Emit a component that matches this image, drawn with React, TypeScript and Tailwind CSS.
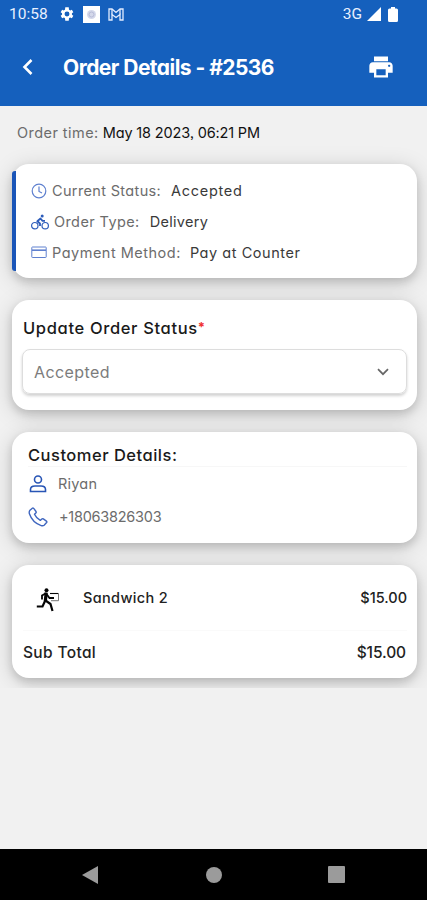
import React from 'react';

interface StatusRowProps {
  icon: React.ReactNode;
  label: string;
  value: string;
  labelClass: string;
  valueClass: string;
}

const StatusRow: React.FC<StatusRowProps> = ({ icon, label, value, labelClass, valueClass }) => (
  <div className="flex h-[31px] items-center whitespace-nowrap text-[14.5px]">
    {icon}
    <span className={`text-[#6c6c6c] ${labelClass}`}>{label}</span>
    <span className={`text-[#3a3a3a] ${valueClass}`}>{value}</span>
  </div>
);

const Card: React.FC<{ className: string; children: React.ReactNode }> = ({ className, children }) => (
  <section
    className={`w-[405px] shrink-0 rounded-[17px] bg-white shadow-[0_4px_9px_rgba(0,0,0,0.14),0_4px_22px_rgba(0,0,0,0.17)] ${className}`}
  >
    {children}
  </section>
);

const StatusBar = () => (
  <div className="flex h-7 items-center pl-[9px] pr-[29px] font-[Roboto] text-[15.5px] text-[#e8f0ff]">
    <span className="w-[50px] pt-px">10:58</span>
    <svg className="h-[16px] w-[16px]" viewBox="0 0 24 24" fill="white">
      <path
        fillRule="evenodd"
        d="M19.4 13a7.500 7.500 0 0 0 0-2l2.100-1.700-2.200-3.700-2.600 1a7.500 7.500 0 0 0-1.700-1L14.600 2H9.400L9 5.600a7.500 7.500 0 0 0-1.700 1l-2.600-1-2.200 3.700L4.600 11a7.500 7.500 0 0 0 0 2l-2.100 1.700 2.200 3.700 2.600-1a7.500 7.500 0 0 0 1.700 1l.4 3.600h5.200l.4-3.600a7.500 7.500 0 0 0 1.700-1l2.600 1 2.200-3.700zM12 15.700a3.700 3.700 0 1 1 0-7.400 3.700 3.700 0 0 1 0 7.400z"
      />
    </svg>
    <svg className="ml-[8px] h-[17px] w-[17px]" viewBox="0 0 17 17">
      <path fill="#fff" d="M0 0h17v17H0z" />
      <circle cx="8.500" cy="8.500" r="4.500" fill="#d4d8ea" />
      <circle cx="8.500" cy="8.500" r="2.500" fill="none" stroke="#b8bcd8" />
    </svg>
    <svg className="ml-[8px] h-[13px] w-[16px]" viewBox="0 0 16 13" fill="none" stroke="#e2ecff" strokeWidth="1.300">
      <path d="M1 12V1h3l4 3.500L12 1h3v11h-3V6.500L8 9.500l-4-3V12z" />
      <path d="M4 1v5.500M12 1v5.500" />
    </svg>
    <span className="ml-auto pt-px text-[15.5px]">3G</span>
    <svg className="ml-[5px] h-[14px] w-[14px]" viewBox="0 0 14 14" fill="white">
      <path d="M14 0v14H0z" />
    </svg>
    <svg className="ml-[7px] h-[15px] w-[10px]" viewBox="0 0 10 15" fill="white">
      <path d="M3 0h4v1.500h1.500Q10 1.500 10 3v10.500Q10 15 8.500 15h-7Q0 15 0 13.500V3Q0 1.500 1.500 1.500H3z" />
    </svg>
  </div>
);

const Header = () => (
  <header className="h-[106px] shrink-0 bg-[#1560bd]">
    <StatusBar />
    <div className="flex h-[78px] items-center pl-[22px] pr-[32px]">
      <svg className="h-[16px] w-[11px]" viewBox="0 0 11 16" fill="none" stroke="white" strokeWidth="2.600">
        <path d="M9.500 1 2.500 8l7 7" />
      </svg>
      <h1 className="ml-[30px] mt-px whitespace-nowrap text-[21px] font-bold tracking-[-0.54px] text-white">
        Order Details - #2536
      </h1>
      <svg className="ml-auto h-[28px] w-[28px] shrink-0" viewBox="0 0 24 24" fill="white">
        <path d="M19 8H5c-1.660 0-3 1.340-3 3v6h4v4h12v-4h4v-6c0-1.660-1.340-3-3-3zm-3 11H8v-5h8v5zm3-7c-.55 0-1-.45-1-1s.45-1 1-1 1 .45 1 1-.45 1-1 1zm-1-9H6v4h12V3z" />
      </svg>
    </div>
  </header>
);

const ClockIcon = () => (
  <svg className="h-[16px] w-[16px]" viewBox="0 0 16 16" fill="none" stroke="#5f80cf" strokeWidth="1.200">
    <circle cx="8" cy="8" r="6.800" />
    <path d="M8 3.500V8.500l3 1.500" />
  </svg>
);

const BikeIcon = () => (
  <svg className="h-[16px] w-[18px]" viewBox="0 0 18 16" fill="none" stroke="#2d5cba" strokeWidth="1.200">
    <circle cx="3.800" cy="11.700" r="3.200" />
    <circle cx="14.200" cy="11.700" r="3.200" />
    <circle cx="11.200" cy="1.900" r="1.500" fill="#2d5cba" stroke="none" />
    <path strokeWidth="1.800" strokeLinejoin="round" d="M9 12V9.500L6.300 7.300 9.500 4.500l2 2.300H14" />
  </svg>
);

const CardIcon = () => (
  <svg className="h-[13px] w-[16px]" viewBox="0 0 16 13" fill="none" stroke="#5f80cf" strokeWidth="1">
    <rect x="0.800" y="1" width="14.400" height="10.500" rx="0.600" />
    <path strokeWidth="1.600" d="M1 4.200h14" />
  </svg>
);

const UserIcon = () => (
  <svg className="h-[18px] w-[18px]" viewBox="0 0 18 18" fill="none" stroke="#2855b5" strokeWidth="1.600">
    <circle cx="9" cy="4.500" r="3.500" />
    <path d="M1.500 16.500v-2Q1.500 11 6 11h6q4.500 0 4.500 3.500v2z" />
  </svg>
);

const PhoneIcon = () => (
  <svg className="h-[20px] w-[20px]" viewBox="0 0 20 20" fill="none" stroke="#3f66bf" strokeWidth="1.400" strokeLinejoin="round">
    <path d="M1.700 3.600 4.300 1.200Q5 .7 5.700 1.400L8 4.500q.5.800-.2 1.500L6.500 7.300q1.700 3.900 5.800 6.100l1.500-1.400q.7-.6 1.500-.1l3.100 2.200q.8.700.2 1.400l-2.500 2.700q-1.100 1-2.900.4Q4.300 15.500 1.300 6.500 1 4.700 1.700 3.600z" />
  </svg>
);

const CourierIcon = () => (
  <svg className="mt-[5px] h-[24px] w-[24px]" viewBox="0 0 24 24" fill="none" stroke="#050505">
    <circle cx="10.500" cy="2.200" r="2" fill="#050505" stroke="none" />
    <path strokeWidth="3.200" d="M10.200 4.500 9.300 13.500" />
    <path strokeWidth="1.800" d="M9.500 5.500 6 7.500v4M10.500 6l3 4h4.500" />
    <path strokeWidth="2.200" d="M9.500 12 6.500 18.500H.8M9.500 12.500l5 3.500 2 7" />
    <path strokeWidth="1.100" d="M14 5.500h8.500" />
    <path strokeWidth="1" stroke="#777" d="M22.500 6v6.700H15" />
  </svg>
);

const NavBar = () => (
  <nav className="flex h-[51px] shrink-0 items-center bg-black pl-[82px]">
    <svg className="h-[18px] w-[16px]" viewBox="0 0 16 18" fill="#9b9b9b">
      <path d="M16 0v18L0 9z" />
    </svg>
    <div className="ml-[108px] h-[16px] w-[16px] rounded-full bg-[#9b9b9b]" />
    <div className="ml-[106px] h-[17px] w-[17px] rounded-[1px] bg-[#9b9b9b]" />
  </nav>
);

export default function App() {
  return (
    <div className="flex h-[900px] w-[427px] flex-col overflow-hidden bg-[#f1f1f1] font-[Inter,sans-serif] [font-feature-settings:'cv11','ss03']">
      <Header />
      <main className="flex h-[582px] shrink-0 flex-col overflow-hidden pl-[12px]">
        <p className="ml-[5px] mt-[16px] h-[22px] whitespace-nowrap text-[14.5px] leading-[22px] text-[#111]">
          <span className="tracking-[0.45px] text-[#6c6c6c]">Order time:</span>
          <span className="ml-[4px] tracking-[-0.15px]">May 18 2023, 06:21 PM</span>
        </p>

        <Card className="mt-[20px] flex h-[114px] items-center">
          <div className="h-[100px] w-[4px] rounded-l-[3px] bg-[#1a55b8]" />
          <div className="ml-[15px] pt-px">
            <StatusRow
              icon={<ClockIcon />}
              label="Current Status:"
              value="Accepted"
              labelClass="ml-[5px] tracking-[0.35px]"
              valueClass="ml-[10px] tracking-[0.7px]"
            />
            <StatusRow
              icon={<BikeIcon />}
              label="Order Type:"
              value="Delivery"
              labelClass="ml-[5px] tracking-[0.4px]"
              valueClass="ml-[10px] tracking-[0.3px]"
            />
            <StatusRow
              icon={<CardIcon />}
              label="Payment Method:"
              value="Pay at Counter"
              labelClass="ml-[5px] tracking-[0.5px]"
              valueClass="ml-[9px] tracking-[0.55px]"
            />
          </div>
        </Card>

        <Card className="mt-[22px] h-[110px] px-[10px] pt-[17px]">
          <div className="flex h-[22px] items-center whitespace-nowrap pl-px text-[16.5px] font-medium tracking-[0.65px] text-[#1a1a1a]">
            Update Order Status
            <span className="text-[13px] font-bold tracking-normal text-[#f03030]">*</span>
          </div>
          <div className="mt-[10px] flex h-[45px] w-[385px] items-center justify-between rounded-[8px] border border-[#ddd] pl-[11px] pr-[17px] text-[16px] tracking-[0.4px] text-[#7c7c7c] shadow-[0_2px_3px_rgba(0,0,0,0.18)]">
            <span>Accepted</span>
            <svg className="h-[8px] w-[12px]" viewBox="0 0 12 8" fill="none" stroke="#666" strokeWidth="1.700">
              <path d="m1 1.200 5 5 5-5" />
            </svg>
          </div>
        </Card>

        <Card className="mt-[22px] h-[111px] px-[16px] pt-[12px]">
          <h2 className="h-[23px] w-[379px] whitespace-nowrap border-b border-[#f7f7f7] text-[16.5px] font-medium leading-[22px] tracking-[0.5px] text-[#1a1a1a]">
            Customer Details:
          </h2>
          <div className="flex h-[34px] items-center pl-px text-[14.5px] tracking-[0.2px] text-[#6c6c6c]">
            <UserIcon />
            <span className="ml-[11px]">Riyan</span>
          </div>
          <div className="flex h-[31px] items-center text-[14.5px] tracking-[-0.25px] text-[#6c6c6c]">
            <PhoneIcon />
            <span className="ml-[11px]">+18063826303</span>
          </div>
        </Card>

        <Card className="mt-[22px] h-[113px] px-[11px]">
          <div className="-mr-px flex h-[66px] items-center border-b border-[#fafafa] pl-[13px] text-[14.5px] font-medium text-[#222]">
            <CourierIcon />
            <span className="ml-[23px] mt-px tracking-[0.35px]">Sandwich 2</span>
            <span className="ml-auto mt-px">$15.00</span>
          </div>
          <div className="flex h-[44px] items-center justify-between text-[15.5px] font-medium text-[#222]">
            <span className="tracking-[0.35px]">Sub Total</span>
            <span className="tracking-[-0.1px]">$15.00</span>
          </div>
        </Card>
      </main>
      <div className="h-[161px] shrink-0" />
      <NavBar />
    </div>
  );
}
